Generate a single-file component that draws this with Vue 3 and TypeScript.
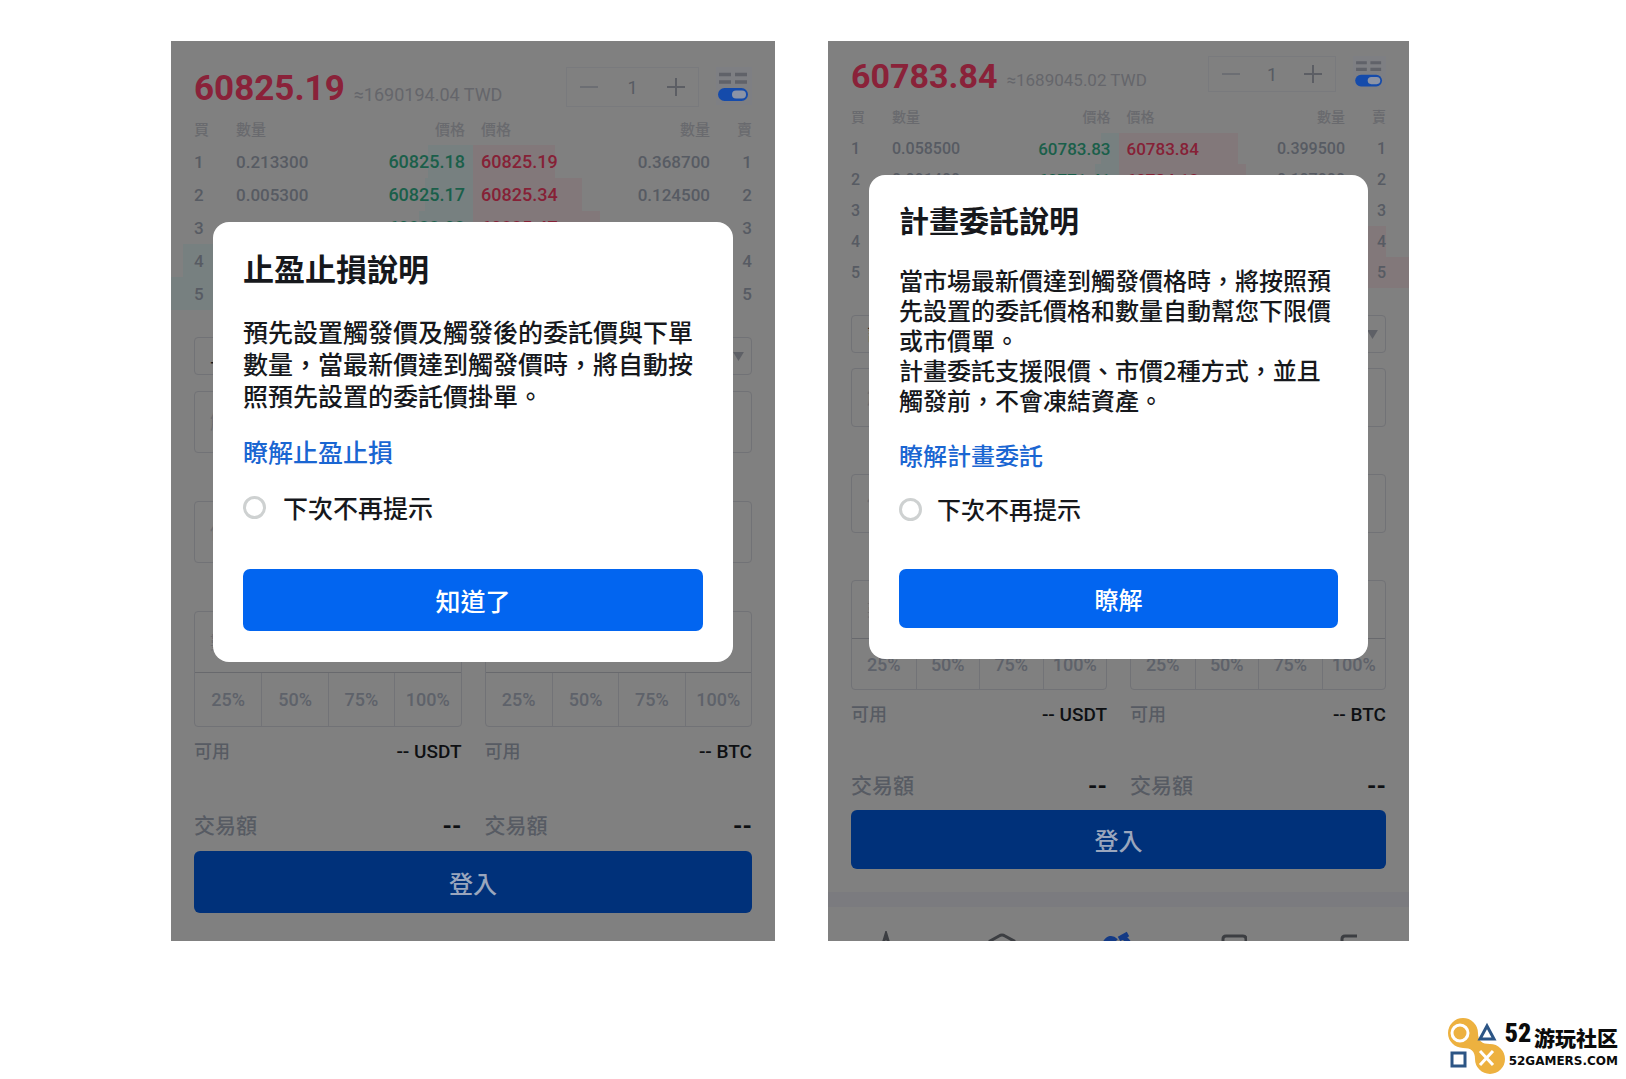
<script setup lang="ts">
import { ref } from 'vue'

interface Level {
  qty: string
  price: string
  depth: number
}

interface Screen {
  id: string
  size: 'large' | 'medium'
  last: string
  fiat: string
  bids: Level[]
  asks: Level[]
  orderType: string
  title: string
  body: string[]
  link: string
  confirm: string
  nav: boolean
}

const screens = ref<Screen[]>([
  {
    id: 'tpsl',
    size: 'large',
    last: '60825.19',
    fiat: '≈1690194.04 TWD',
    bids: [
      { qty: '0.213300', price: '60825.18', depth: 15 },
      { qty: '0.005300', price: '60825.17', depth: 16 },
      { qty: '0.000600', price: '60823.03', depth: 18 },
      { qty: '', price: '', depth: 96 },
      { qty: '', price: '', depth: 100 },
    ],
    asks: [
      { qty: '0.368700', price: '60825.19', depth: 27 },
      { qty: '0.124500', price: '60825.34', depth: 36 },
      { qty: '0.100800', price: '60825.47', depth: 42 },
      { qty: '', price: '', depth: 50 },
      { qty: '', price: '', depth: 60 },
    ],
    orderType: '止盈止損',
    title: '止盈止損說明',
    body: ['預先設置觸發價及觸發後的委託價與下單數量，當最新價達到觸發價時，將自動按照預先設置的委託價掛單。'],
    link: '瞭解止盈止損',
    confirm: '知道了',
    nav: false,
  },
  {
    id: 'plan',
    size: 'medium',
    last: '60783.84',
    fiat: '≈1689045.02 TWD',
    bids: [
      { qty: '0.058500', price: '60783.83', depth: 6 },
      { qty: '0.091400', price: '60771.41', depth: 8 },
      { qty: '', price: '', depth: 20 },
      { qty: '', price: '', depth: 30 },
      { qty: '', price: '', depth: 40 },
    ],
    asks: [
      { qty: '0.399500', price: '60783.84', depth: 41 },
      { qty: '0.107000', price: '60784.12', depth: 44 },
      { qty: '', price: '', depth: 60 },
      { qty: '', price: '', depth: 92 },
      { qty: '', price: '', depth: 100 },
    ],
    orderType: '計畫委託',
    title: '計畫委託說明',
    body: [
      '當市場最新價達到觸發價格時，將按照預先設置的委託價格和數量自動幫您下限價或市價單。',
      '計畫委託支援限價、市價2種方式，並且觸發前，不會凍結資產。',
    ],
    link: '瞭解計畫委託',
    confirm: '瞭解',
    nav: true,
  },
])

const percents = ['25%', '50%', '75%', '100%']
const coins = ['USDT', 'BTC']
</script>

<template>
  <div class="page">
    <main class="screens">
      <section v-for="s in screens" :key="s.id" class="screen" :class="s.size">
        <header class="quote">
          <strong class="last">{{ s.last }}</strong>
          <span class="fiat">{{ s.fiat }}</span>
          <div class="stepper">
            <button type="button" aria-label="-">
              <svg viewBox="0 0 20 20"><path d="M1 10H19" /></svg>
            </button>
            <input type="text" value="1" :aria-label="s.orderType" />
            <button type="button" aria-label="+">
              <svg class="plus" viewBox="0 0 20 20"><path d="M1 10H19M10 1V19" /></svg>
            </button>
          </div>
          <button type="button" class="layout" aria-label="layout">
            <svg viewBox="0 0 36 38">
              <path d="M3 7.500H15M19 7.500H31M3 15H15M19 15H31" stroke="#606269" stroke-width="3.500" />
              <rect x="2" y="21" width="30" height="13" rx="6.500" fill="#154bab" />
              <rect x="16" y="23.500" width="14" height="8" rx="4" fill="#8b93a6" />
            </svg>
          </button>
        </header>

        <table class="book">
          <colgroup>
            <col class="c-no" /><col /><col /><col /><col /><col class="c-no" />
          </colgroup>
          <thead>
            <tr>
              <th>買</th>
              <th>數量</th>
              <th class="r">價格</th>
              <th class="l">價格</th>
              <th class="r">數量</th>
              <th class="r">賣</th>
            </tr>
          </thead>
          <tbody>
            <tr v-for="(bid, i) in s.bids" :key="i">
              <td>{{ i + 1 }}</td>
              <td>{{ bid.qty }}</td>
              <td class="price buy r">
                <span class="depth" :style="{ width: bid.depth / 2 + '%' }"></span>{{ bid.price }}
              </td>
              <td class="price sell l">
                <span class="depth" :style="{ width: s.asks[i].depth / 2 + '%' }"></span>{{ s.asks[i].price }}
              </td>
              <td class="r">{{ s.asks[i].qty }}</td>
              <td class="r">{{ i + 1 }}</td>
            </tr>
          </tbody>
        </table>

        <div class="trade">
          <div class="select">
            <select :aria-label="s.title">
              <option>{{ s.orderType }}</option>
            </select>
            <svg viewBox="0 0 12 10"><path d="M0 0H12L6 10Z" fill="#5e6066" /></svg>
          </div>
          <div class="sides">
            <div v-for="coin in coins" :key="coin" class="side">
              <input class="field" type="text" placeholder="觸發價" aria-label="觸發價" />
              <input class="field" type="text" placeholder="價格" aria-label="價格" />
              <div class="amount">
                <input type="text" placeholder="數量" aria-label="數量" />
                <div class="percents">
                  <button v-for="p in percents" :key="p" type="button">{{ p }}</button>
                </div>
              </div>
              <div class="avail"><span>可用</span><b>-- {{ coin }}</b></div>
              <div class="total"><span>交易額</span><b>--</b></div>
            </div>
          </div>
          <button type="button" class="login">登入</button>
        </div>

        <nav v-if="s.nav" class="tabs">
          <a href="#" aria-label="1"><svg viewBox="0 0 28 28"><path d="M14 3L17 13L26 24H2L11 13Z" /></svg></a>
          <a href="#" aria-label="2"><svg viewBox="0 0 28 28"><path d="M2 10L11 5Q14 3 17 5L26 10V24H2Z" /></svg></a>
          <a href="#" aria-label="3" class="on">
            <svg viewBox="0 0 28 28"><path d="M2 12Q7 4 13 10M16 8L25 3M20 5L26 12" /></svg>
          </a>
          <a href="#" aria-label="4"><svg viewBox="0 0 28 28"><path d="M4 26V8Q4 5 7 5H24Q27 5 27 8V26Z" /></svg></a>
          <a href="#" aria-label="5"><svg viewBox="0 0 28 28"><path d="M22 5H10Q7 5 7 8V26" /></svg></a>
        </nav>

        <div class="dialog" role="dialog" :aria-labelledby="s.id + '-title'">
          <h2 :id="s.id + '-title'">{{ s.title }}</h2>
          <p v-for="t in s.body" :key="t">{{ t }}</p>
          <a class="more" href="#">{{ s.link }}</a>
          <label class="mute"><input type="radio" :name="s.id" />下次不再提示</label>
          <button type="button" class="confirm">{{ s.confirm }}</button>
        </div>
      </section>
    </main>

    <footer class="brand">
      <svg class="mark" viewBox="0 0 58 58">
        <path
          d="M16 1A15 15 0 0 1 31 16C31 24 35 27 43 27A15 15 0 1 1 28 42C28 34 24 31 16 31A15 15 0 0 1 16 1Z"
          fill="#edb13f"
        />
        <circle cx="13" cy="16" r="8" fill="none" stroke="#fff" stroke-width="3" />
        <path d="M33 34L46 48M46 34L33 48" stroke="#fff" stroke-width="3" />
        <path d="M40 9L47 22H33Z" fill="none" stroke="#2c5585" stroke-width="3" />
        <rect x="5" y="36" width="13" height="13" fill="none" stroke="#2c5585" stroke-width="3" />
      </svg>
      <div class="words">
        <div class="name"><span class="num">52</span><span class="han">游玩社区</span></div>
        <div class="site">52GAMERS.COM</div>
      </div>
    </footer>
  </div>
</template>

<style>
body {
  margin: 0;
  background: #fff;
}
</style>

<style scoped>
.page {
  box-sizing: border-box;
  min-height: 100vh;
  display: flex;
  flex-direction: column;
  justify-content: space-between;
  font-family: Roboto, "Noto Sans CJK TC", sans-serif;
}
.page * {
  box-sizing: border-box;
}
button,
input,
select {
  font: inherit;
  color: inherit;
  margin: 0;
  padding: 0;
  border: 0;
  background: none;
  border-radius: 0;
  appearance: none;
  outline: none;
}
.screens {
  display: flex;
  align-items: flex-start;
  gap: 53px;
  padding: 41px 217px 0 171px;
}
.screen {
  position: relative;
  min-width: 0;
  background: #808080;
  color: #575b63;
}
.large {
  flex: 604 1 0;
  --head-top: 26px;
  --last: 35px;
  --last-line: 44px;
  --fiat: 18px;
  --step-w: 133px;
  --step-h: 40px;
  --icon-w: 36px;
  --icon-h: 38px;
  --book-top: 4px;
  --th: 15px;
  --th-h: 30px;
  --row: 33px;
  --qty: 17px;
  --price: 18px;
  --no: 65px;
  --gap: 16px;
  --field: 62px;
  --field-gap: 48px;
  --pct: 55px;
  --total-top: 47px;
  --total: 21px;
  --total-line: 30px;
  --foot: 28px;
  --dlg-top: 181px;
  --dlg-pad: 30px;
  --title: 31px;
  --title-top: 24px;
  --title-gap: 25px;
  --text: 25px;
  --line: 32px;
  --more-top: 24px;
  --mute-top: 24px;
  --mute-gap: 17px;
  --btn-top: 46px;
}
.medium {
  flex: 581 1 0;
  --head-top: 15px;
  --last: 34px;
  --last-line: 40px;
  --fiat: 17px;
  --step-w: 128px;
  --step-h: 36px;
  --icon-w: 33px;
  --icon-h: 34px;
  --book-top: 4px;
  --th: 14px;
  --th-h: 33px;
  --row: 31px;
  --qty: 16px;
  --price: 17px;
  --no: 64px;
  --gap: 15px;
  --field: 59px;
  --field-gap: 47px;
  --pct: 52px;
  --total-top: 45px;
  --total: 21px;
  --total-line: 28px;
  --foot: 23px;
  --dlg-top: 134px;
  --dlg-pad: 30px;
  --title: 30px;
  --title-top: 22px;
  --title-gap: 24px;
  --text: 24px;
  --line: 30px;
  --more-top: 25px;
  --mute-top: 24px;
  --mute-gap: 15px;
  --btn-top: 45px;
}
.quote {
  display: flex;
  align-items: flex-start;
  padding: var(--head-top) 23px 0;
}
.last {
  font-size: var(--last);
  line-height: var(--last-line);
  font-weight: 700;
  color: #8a2239;
}
.fiat {
  align-self: flex-end;
  margin-left: 9px;
  font-size: var(--fiat);
  line-height: 32px;
  color: #65666b;
}
.stepper {
  display: flex;
  width: var(--step-w);
  height: var(--step-h);
  margin-left: auto;
  border: 1px solid #797a7d;
  font-size: 18px;
}
.stepper button {
  flex: none;
  width: 44px;
  display: grid;
  place-items: center;
}
.stepper svg {
  width: 20px;
  height: 20px;
  stroke: #6c6e73;
  stroke-width: 2;
}
.stepper .plus {
  stroke: #5c5e64;
}
.stepper input {
  flex: 1;
  min-width: 0;
  text-align: center;
}
.layout {
  width: var(--icon-w);
  height: var(--icon-h);
  margin-left: 17px;
  background: #7e7f83;
}
.layout svg {
  display: block;
  width: 100%;
  height: 100%;
}
.book {
  width: 100%;
  margin-top: var(--book-top);
  table-layout: fixed;
  border-collapse: collapse;
  font-size: var(--qty);
}
.c-no {
  width: var(--no);
}
.book th {
  height: var(--th-h);
  padding: 0;
  font-size: var(--th);
  line-height: 20px;
  font-weight: 500;
  text-align: left;
  color: #696a6e;
}
.book td {
  height: var(--row);
  padding: 0;
  line-height: 20px;
}
.book tbody tr {
  position: relative;
  z-index: 0;
}
.book .r {
  text-align: right;
}
.book .r:nth-child(3) {
  padding-right: 8px;
}
.book .l {
  padding-left: 8px;
}
.book tr > :first-child {
  padding-left: 23px;
}
.book tr > :last-child {
  padding-right: 23px;
}
.book td {
  font-weight: 500;
}
.book .price {
  font-size: var(--price);
}
.buy {
  color: #1a5f4a;
}
.sell {
  color: #862136;
}
.depth {
  position: absolute;
  z-index: -1;
  top: 0;
  bottom: 0;
}
.buy .depth {
  right: 50%;
  background: #778080;
}
.sell .depth {
  left: 50%;
  background: #82787a;
}
.trade {
  padding: 27px 23px var(--foot);
}
.select {
  display: grid;
  align-items: center;
  height: 38px;
  border: 1px solid #717276;
  border-radius: 4px;
}
.select > * {
  grid-area: 1 / 1;
}
.select select {
  height: 36px;
  padding-left: 15px;
  font-size: 19px;
  color: #15171a;
}
.select svg {
  justify-self: end;
  width: 11px;
  height: 9px;
  margin-right: 7px;
}
.sides {
  display: grid;
  grid-template-columns: 1fr 1fr;
  gap: 23px;
  margin-top: var(--gap);
}
.side {
  min-width: 0;
}
.field {
  display: block;
  width: 100%;
  height: var(--field);
  margin-bottom: var(--field-gap);
  padding-left: 15px;
  border: 1px solid #717276;
  border-radius: 4px;
  font-size: 19px;
}
::placeholder {
  color: #6c6d71;
  opacity: 1;
}
.amount {
  border: 1px solid #717276;
  border-radius: 4px;
}
.amount input {
  display: block;
  width: 100%;
  height: calc(var(--field) - 1px);
  padding-left: 15px;
  font-size: 19px;
  border-bottom: 1px solid #68696d;
}
.percents {
  display: grid;
  grid-template-columns: repeat(4, 1fr);
}
.percents button {
  height: calc(var(--pct) - 2px);
  border-left: 1px solid #727377;
  font-size: 18px;
  font-weight: 500;
  color: #5e626a;
}
.percents button:first-child {
  border-left: 0;
}
.avail,
.total {
  display: flex;
  justify-content: space-between;
  font-weight: 500;
}
.avail {
  margin-top: 13px;
  font-size: 18px;
  line-height: 24px;
}
.avail b {
  font-size: 19px;
  font-weight: 500;
  color: #0e1013;
}
.total {
  margin-top: var(--total-top);
  font-size: var(--total);
  line-height: var(--total-line);
}
.total b {
  font-size: 24px;
  font-weight: 700;
  color: #0e1013;
}
.login {
  display: block;
  width: 100%;
  height: var(--field);
  margin-top: 10px;
  border-radius: 6px;
  background: #00317a;
  color: #9aa6bd;
  font-size: 24px;
  font-weight: 500;
}
.tabs {
  display: flex;
  justify-content: space-around;
  height: 49px;
  overflow: hidden;
  padding: 24px 2px 0 0;
  border-top: 15px solid #7b7b7f;
}
.tabs svg {
  display: block;
  width: 28px;
  height: 28px;
  fill: none;
  stroke: #3c3e42;
  stroke-width: 3;
}
.tabs .on svg {
  stroke: #143a85;
  stroke-width: 5;
}
.dialog {
  position: absolute;
  top: var(--dlg-top);
  left: 41px;
  right: 41px;
  display: flex;
  flex-direction: column;
  padding: var(--title-top) var(--dlg-pad) 31px;
  border-radius: 16px;
  background: #fff;
  color: #16181c;
  font-family: "Noto Sans CJK TC", sans-serif;
  font-size: var(--text);
  line-height: var(--line);
  font-weight: 500;
}
.large .dialog {
  left: 42px;
  right: 42px;
}
.dialog h2 {
  margin: 0 0 var(--title-gap);
  font-size: var(--title);
  line-height: 44px;
  font-weight: 700;
}
.dialog p {
  margin: 0;
}
.more {
  align-self: flex-start;
  margin-top: var(--more-top);
  color: #1a66d2;
  text-decoration: none;
}
.mute {
  display: flex;
  align-items: center;
  gap: var(--mute-gap);
  margin-top: var(--mute-top);
}
.mute input {
  width: 23px;
  height: 23px;
  border: 3px solid #ced1d1;
  border-radius: 50%;
}
.confirm {
  height: var(--field);
  margin-top: var(--btn-top);
  border-radius: 7px;
  background: #0265f0;
  color: #fff;
}
.brand {
  display: flex;
  align-self: flex-end;
  padding: 0 8px 4px 0;
  color: #0b0b0b;
}
.mark {
  width: 58px;
  height: 58px;
}
.words {
  padding-top: 2px;
}
.name {
  display: flex;
  justify-content: space-between;
  line-height: 28px;
}
.num {
  font-family: "Liberation Sans Narrow", "Roboto Condensed", Roboto, sans-serif;
  font-size: 26px;
  font-weight: 900;
}
.han {
  padding-top: 4px;
  font-family: "Noto Sans CJK SC", sans-serif;
  font-size: 21px;
  font-weight: 900;
}
.site {
  padding-left: 4px;
  font-family: "DejaVu Sans", sans-serif;
  font-size: 12px;
  line-height: 20px;
  font-weight: 700;
}
</style>
